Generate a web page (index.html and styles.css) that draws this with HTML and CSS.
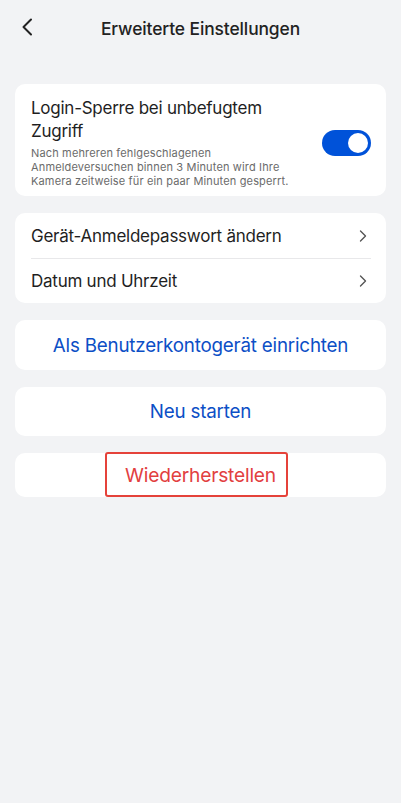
FILE: index.html
```html
<!DOCTYPE html>
<html lang="de">
<head>
<meta charset="utf-8">
<link rel="stylesheet" href="styles.css">
</head>
<body>
<header class="nav">
  <span class="back">
    <svg width="12" height="18" viewBox="0 0 12 18"><path d="M10 1.5 L2.5 9 L10 16.5" fill="none" stroke="#222" stroke-width="2" stroke-linecap="round" stroke-linejoin="round"/></svg>
  </span>
  <h1 class="title">Erweiterte Einstellungen</h1>
</header>
<main class="content">
  <section class="card lock">
    <div class="lock-text">
      <div class="lock-title">Login-Sperre bei unbefugtem Zugriff</div>
      <div class="lock-desc">Nach mehreren fehlgeschlagenen Anmeldeversuchen binnen 3 Minuten wird Ihre Kamera zeitweise für ein paar Minuten gesperrt.</div>
    </div>
    <span class="toggle"><span class="knob"></span></span>
  </section>
  <section class="card list">
    <div class="row">
      <span>Gerät-Anmeldepasswort ändern</span>
      <svg class="chev" width="8" height="12" viewBox="0 0 8 12"><path d="M1.5 1 L6.5 6 L1.5 11" fill="none" stroke="#555" stroke-width="1.4" stroke-linecap="round" stroke-linejoin="round"/></svg>
    </div>
    <div class="row">
      <span>Datum und Uhrzeit</span>
      <svg class="chev" width="8" height="12" viewBox="0 0 8 12"><path d="M1.5 1 L6.5 6 L1.5 11" fill="none" stroke="#555" stroke-width="1.4" stroke-linecap="round" stroke-linejoin="round"/></svg>
    </div>
  </section>
  <section class="card action blue h50">Als Benutzerkontogerät einrichten</section>
  <section class="card action blue h49">Neu starten</section>
  <section class="card action red h44">
    Wiederherstellen
    <span class="mark"></span>
  </section>
</main>
</body>
</html>
```
FILE: styles.css
```css
* { box-sizing: border-box; }
html, body { margin: 0; padding: 0; }
body {
  background: #f2f3f5;
  font-family: "Inter", "Roboto", "Noto Sans", sans-serif;
  color: #1f1f1f;
  width: 401px;
  min-height: 803px;
}
.nav {
  position: relative;
  height: 56px;
  display: flex;
  align-items: center;
  justify-content: center;
}
.back {
  position: absolute;
  left: 21px;
  top: 18px;
  display: flex;
}
.title {
  margin: 0;
  font-size: 17.4px;
  font-weight: 500;
  color: #222;
  letter-spacing: -0.1px;
}
.content {
  padding: 28px 15px 0 15px;
  display: flex;
  flex-direction: column;
  gap: 17px;
}
.card {
  background: #fff;
  border-radius: 10px;
}
.lock {
  display: flex;
  align-items: center;
  padding: 13px 15px 8px 16px;
  min-height: 112px;
}
.lock-text { flex: 1; }
.lock-title {
  font-size: 17px;
  line-height: 23px;
  width: 250px;
  color: #1f1f1f;
  letter-spacing: -0.25px;
}
.lock-desc {
  margin-top: 3px;
  font-size: 11px;
  line-height: 14px;
  color: #6b6b6b;
  letter-spacing: 0.15px;
  width: 270px;
}
.toggle {
  width: 49px;
  height: 26px;
  border-radius: 13px;
  background: #0052d9;
  position: relative;
  flex: none;
}
.knob {
  position: absolute;
  right: 3px;
  top: 3px;
  width: 20px;
  height: 20px;
  border-radius: 50%;
  background: #fff;
}
.list {
  padding: 0 15px 0 16px;
}
.row {
  height: 45px;
  display: flex;
  align-items: center;
  justify-content: space-between;
  font-size: 17px;
  letter-spacing: -0.25px;
  padding-right: 4px;
}
.row + .row { border-top: 1px solid #e8e8ea; }
.action {
  display: flex;
  align-items: center;
  justify-content: center;
  font-size: 18.8px;
  letter-spacing: -0.2px;
  position: relative;
}
.h50 { height: 50px; }
.h49 { height: 49px; }
.h44 { height: 44px; }
.blue { color: #0c4fc6; }
.red { color: #e2403f; font-size: 19.2px; }
.mark {
  position: absolute;
  left: 90px;
  top: -1px;
  width: 183px;
  height: 45px;
  border: 2px solid #e5423a;
  border-radius: 3px;
}
```
